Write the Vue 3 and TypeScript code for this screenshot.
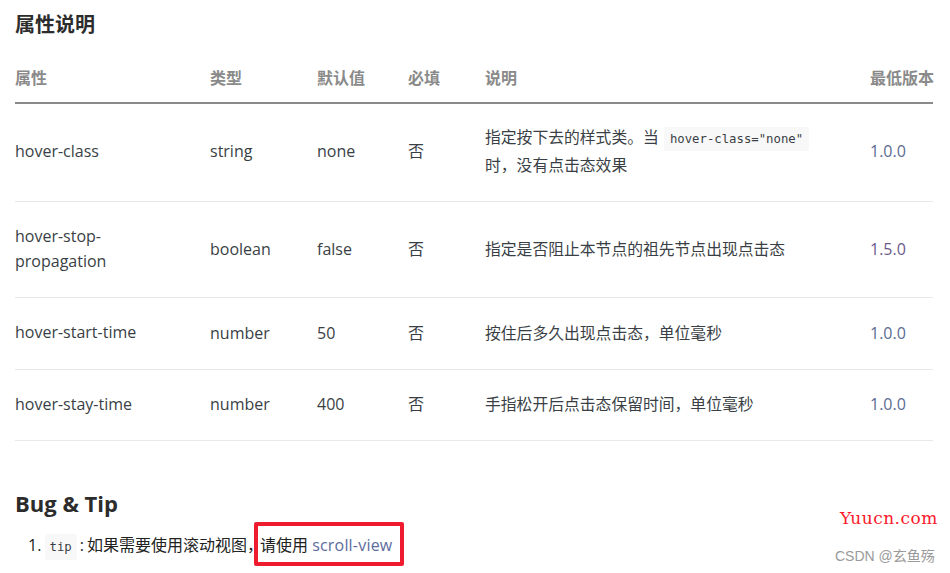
<script setup lang="ts">
interface Row { name: string; type: string; def: string; req: string; desc: string; ver: string }
const rows: Row[] = [
  { name: 'hover-class', type: 'string', def: 'none', req: '否', desc: '', ver: '1.0.0' },
  { name: 'hover-stop-propagation', type: 'boolean', def: 'false', req: '否', desc: '指定是否阻止本节点的祖先节点出现点击态', ver: '1.5.0' },
  { name: 'hover-start-time', type: 'number', def: '50', req: '否', desc: '按住后多久出现点击态，单位毫秒', ver: '1.0.0' },
  { name: 'hover-stay-time', type: 'number', def: '400', req: '否', desc: '手指松开后点击态保留时间，单位毫秒', ver: '1.0.0' },
]
const heads = ['属性', '类型', '默认值', '必填', '说明', '最低版本']
</script>

<template>
  <div class="page">
    <h3 class="title">属性说明</h3>
    <table class="tbl">
      <colgroup>
        <col class="c1" /><col class="c2" /><col class="c3" /><col class="c4" /><col class="c5" /><col class="c6" />
      </colgroup>
      <thead>
        <tr><th v-for="h in heads" :key="h">{{ h }}</th></tr>
      </thead>
      <tbody>
        <tr v-for="(r, i) in rows" :key="r.name" :class="'row' + i">
          <td class="name">{{ r.name }}</td>
          <td>{{ r.type }}</td>
          <td>{{ r.def }}</td>
          <td>{{ r.req }}</td>
          <td class="desc">
            <template v-if="i === 0">指定按下去的样式类。当 <code class="code">hover-class="none"</code> 时，没有点击态效果</template>
            <template v-else>{{ r.desc }}</template>
          </td>
          <td class="ver" :class="{ purple: i === 1 }">{{ r.ver }}</td>
        </tr>
      </tbody>
    </table>
    <h3 class="title bug">Bug &amp; Tip</h3>
    <ol class="tips">
      <li><code class="code tip">tip</code><span class="colon">:</span>如果需要使用滚动视图，<span class="gap">请使用 <a class="link">scroll-view</a></span></li>
    </ol>
    <div class="redbox"></div>
    <div class="mark1">Yuucn.com</div>
    <div class="mark2">CSDN @玄鱼殇</div>
  </div>
</template>

<style>
html, body { margin: 0; background: #fff; overflow: hidden; }
</style>

<style scoped>
.page {
  position: relative;
  width: 950px;
  height: 573px;
  overflow: hidden;
  box-sizing: border-box;
  padding: 11px 17px 0 15px;
  font-family: "Open Sans", "Noto Sans CJK SC", sans-serif;
  font-size: 16px;
  color: #34495e;
  background: #fff;
}
.title {
  margin: 0;
  font-size: 20px;
  line-height: 28px;
  font-weight: 700;
  color: #2c2c2c;
}
.tbl {
  width: 918px;
  margin-top: 13px;
  border-collapse: collapse;
  table-layout: fixed;
}
.c1 { width: 195px; }
.c2 { width: 107px; }
.c3 { width: 91px; }
.c4 { width: 77px; }
.c5 { width: 385px; }
.c6 { width: 63px; }
th {
  height: 50px;
  padding: 0;
  text-align: left;
  font-weight: 700;
  color: #8a8a8a;
  border-bottom: 2px solid #8a8a8a;
  white-space: nowrap;
}
td {
  padding: 0 0 2px;
  line-height: 26px;
  border-bottom: 1px solid #e8e8e8;
  color: #3a3f45;
}
.row0 td { height: 94px; padding-bottom: 3px; }
.row1 td { height: 93px; }
.row2 td { height: 69px; }
.row3 td { height: 68px; }
.name { padding-right: 45px; line-height: 25px; }
.desc { font-size: 15.8px; line-height: 26px; padding-right: 60px; }
.ver { color: #5b6b92; }
.purple { color: #6b5b8c; }
.code {
  font-family: "DejaVu Sans Mono", "Liberation Mono", monospace;
  font-size: 12.3px;
  background: #f8f8f8;
  border-radius: 2px;
  padding: 5px 6px;
  margin: 0 0 0 1px;
  color: #3a3f45;
}
.bug { margin-top: 48px; font-size: 22px; }
.tips {
  margin: 14px 0 0;
  padding: 0 0 0 13px;
  list-style-position: inside;
  line-height: 28px;
  color: #222;
}
.tip { margin: 0 0 0 -1px; padding: 6px 5px; }
.colon { margin: 0 3px; }
.gap { margin-left: -3px; }
.link { color: #5b6b9e; letter-spacing: 0.2px; }
.redbox {
  position: absolute;
  left: 254px;
  top: 522px;
  width: 150px;
  height: 44px;
  box-sizing: border-box;
  border: 4px solid #ee1c2e;
  border-radius: 2px;
}
.mark1 {
  position: absolute;
  left: 840px;
  top: 508px;
  font-family: "DejaVu Serif", serif;
  font-size: 17px;
  letter-spacing: 0.5px;
  line-height: 20px;
  color: #fa1a2c;
}
.mark2 {
  position: absolute;
  left: 835px;
  top: 546px;
  font-family: "Liberation Sans", "Noto Sans CJK SC", sans-serif;
  font-size: 14px;
  line-height: 20px;
  color: #9a9a9a;
}
</style>
